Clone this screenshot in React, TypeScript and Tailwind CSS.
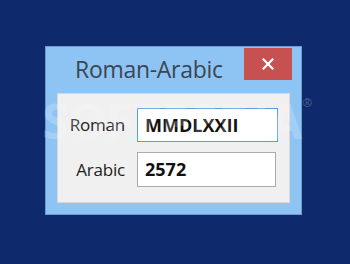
import React from "react";

export default function App() {
  const font = { fontFamily: '"Open Sans", "Noto Sans", Arial, sans-serif' };
  return (
    <div className="w-[350px] h-[264px] bg-[#0e2a6c] pl-[45px] pt-[46px] overflow-hidden relative" style={font}>
      <div className="w-[257px] h-[169px] bg-[#8ec4f4] border border-[#6f9bd0] flex flex-col relative">
        <div className="h-[46px] flex items-start relative">
          <div className="flex-1 pl-[29px] pt-[8px] text-[23px] leading-[28px] text-[#3d4550] tracking-[-0.3px]">Roman-Arabic</div>
          <div className="w-[48px] h-[32px] mt-[1px] mr-[9px] bg-[#c75050] flex items-center justify-center">
            <svg width="12" height="12" viewBox="0 0 12 12">
              <path d="M1.5 1.5 L10.5 10.5 M10.5 1.5 L1.5 10.5" stroke="white" strokeWidth="2.2" strokeLinecap="square" />
            </svg>
          </div>
        </div>
        <div className="mx-[11px] mb-[11px] flex-1 bg-[#f0f0f0] border border-[#d8d8d8] flex flex-col pt-[14px] gap-[10px]">
          <div className="flex items-center">
            <div className="w-[67px] text-right text-[17px] tracking-[-0.2px] text-[#202020]">Roman</div>
            <div className="ml-[12px] w-[141px] h-[34px] bg-white border border-[#5a9de0] flex items-center pl-[7px] text-[18px] font-bold text-[#111]">MMDLXXII</div>
          </div>
          <div className="flex items-center">
            <div className="w-[67px] text-right text-[17px] tracking-[-0.2px] text-[#202020]">Arabic</div>
            <div className="ml-[12px] w-[139px] h-[35px] bg-white border border-[#ababab] flex items-center pl-[7px] text-[18px] font-bold text-[#111]">2572</div>
          </div>
        </div>
        <div className="absolute left-[-4px] top-[50px] text-[48px] font-bold text-white/20 tracking-[0px] pointer-events-none select-none leading-none">
          SOFTPEDIA<span className="text-[12px] align-top">®</span>
        </div>
      </div>
    </div>
  );
}
